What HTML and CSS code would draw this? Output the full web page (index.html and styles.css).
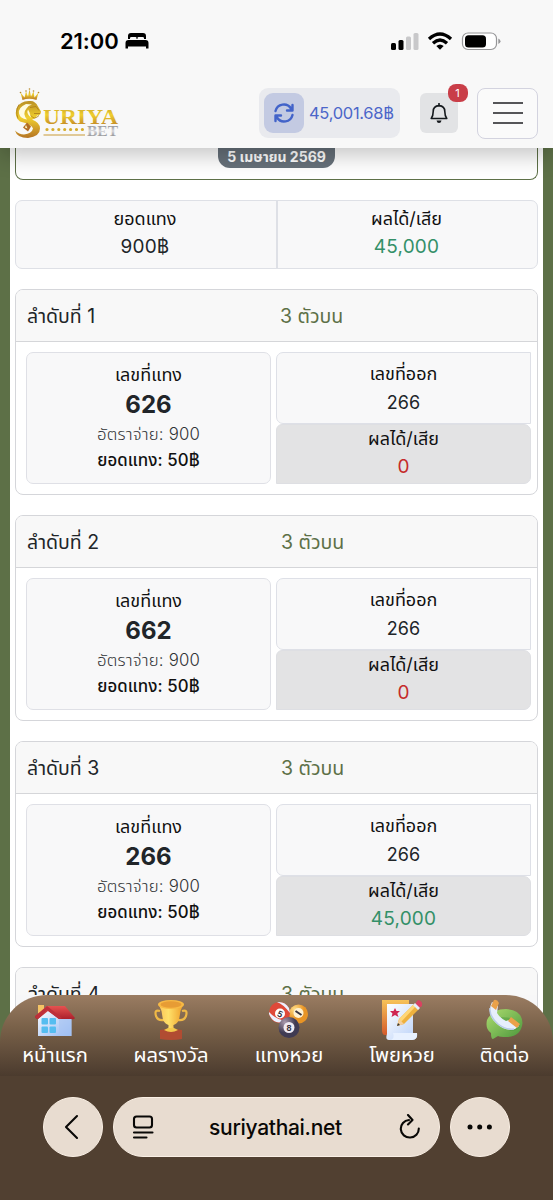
FILE: index.html
```
<!DOCTYPE html>
<html lang="th">
<head>
<meta charset="utf-8">
<meta name="viewport" content="width=device-width">
<title>Suriya Bet</title>
<link rel="stylesheet" href="styles.css">
</head>
<body>
<div class="screen">
  <header class="top">
    <div class="status">
      <span class="clock">21:00</span>
      <svg class="bed" width="24" height="18" viewBox="0 0 24 18"><path d="M3 7V4Q3 1 6 1H18Q21 1 21 4V7H19V6Q19 5 17.500 5H13.500Q12.500 5 12.500 6V7H11.500V6Q11.500 5 10.500 5H6.500Q5 5 5 6V7ZM3.500 8H20.500Q23.500 8 23.500 11V16.500H21V14.500H3V16.500H.5V11Q.5 8 3.500 8Z"/></svg>
      <svg class="signals" width="112" height="20" viewBox="0 0 112 20">
        <rect x="1" y="12" width="5" height="7" rx="1.500"/><rect x="8.500" y="9" width="5" height="10" rx="1.500"/>
        <g fill="#c8c8ca"><rect x="16" y="5.500" width="5" height="13.500" rx="1.500"/><rect x="23.500" y="2" width="5" height="17" rx="1.500"/></g>
        <g fill="none" stroke="#000" stroke-width="3.300"><path d="M39 8Q50-2 61 8"/><path d="M43 12.200Q50 5.800 57 12.200"/></g><path d="M46.300 15Q50 11.800 53.700 15L50 18.800Z"/>
        <rect x="72.500" y="2" width="34" height="16.500" rx="5.500" fill="#fff" stroke="#969698" stroke-width="1.200"/><rect x="75" y="4.200" width="21" height="12.200" rx="3.500"/><path d="M108.300 7.500Q110.500 8.500 110.500 10.300T108.300 13Z" fill="#969698"/>
      </svg>
    </div>
    <div class="bar">
      <svg class="logo" width="108" height="54" viewBox="0 -1.500 108 54">
        <defs><linearGradient id="gold" x1="0" y1="0" x2="0" y2="1"><stop offset="0" stop-color="#b98f25"/><stop offset=".45" stop-color="#f0cf2f"/><stop offset="1" stop-color="#b57424"/></linearGradient>
        <linearGradient id="silver" x1="0" y1="0" x2="0" y2="1"><stop offset="0" stop-color="#77787c"/><stop offset=".5" stop-color="#d9d9dc"/><stop offset="1" stop-color="#77777b"/></linearGradient></defs>
        <path d="M8.500 12.500L6.500 5L10.500 10L12 4L14 9L15.500 2L17 9L19.500 4L20.500 10L24.500 5L22.500 12.500Q15 10 8.500 12.500Z" fill="url(#gold)"/>
        <g fill="#b88928"><circle cx="6.500" cy="5" r=".8"/><circle cx="12" cy="3.500" r=".8"/><circle cx="15.500" cy="1.500" r=".8"/><circle cx="19.500" cy="3.500" r=".8"/><circle cx="24.500" cy="5" r=".8"/></g>
        <path d="M16 13.500Q6 13 2.500 21Q0 30 6 34Q18 37 19 41Q18 46 10 47Q5 47 1 43Q3 50.500 14 50.500Q26 49 26 41Q26 35 18 32Q22 31 23 28Q27 28 27 24L24 19Q21 13 16 13.500Z" fill="url(#gold)"/>
        <path d="M12 16.500Q4 20 5 26Q6 31 13 32Q8 26 12.500 21Q14 18 18 17Z" fill="#fffbe0"/>
        <path d="M14 22Q12 26 17 30L15.500 25Z" fill="#fffbe0"/>
        <path d="M5 17Q1 23 4 31M16 20L22 19L25 23M20 26L26 26M17 28Q20 33 25 28" fill="none" stroke="#a97a1c" stroke-width=".8"/>
        <path d="M13 35L9 40L14 44L17 39Z" fill="#b16c24"/><path d="M12 37.500L10.800 40L13.500 41Z" fill="#fff5c0"/>
        <text class="logo-main" x="29" y="36" textLength="75" lengthAdjust="spacingAndGlyphs" fill="url(#gold)">URIYA</text>
        <path d="M29.500 47.500H71" stroke="#c89a37" stroke-width="1.200"/>
        <path d="M33 42H70" stroke="#d6ad2c" stroke-width="3.200" stroke-dasharray="0 5.900" stroke-linecap="round"/>
        <text class="logo-sub" x="73" y="48" textLength="31" lengthAdjust="spacingAndGlyphs" fill="url(#silver)">BET</text>
      </svg>
      <div class="balance">
        <span class="refresh"><svg width="22" height="22" viewBox="0 0 22 22" fill="none" stroke="#4263c9" stroke-width="2.400" stroke-linecap="round" stroke-linejoin="round"><path d="M2.500 9A8.500 8.500 0 0 1 18 6.500M19.500 3V8.500H14M19.500 13A8.500 8.500 0 0 1 4 15.500M2.500 19V13.500H8"/></svg></span>
        <span class="amount">45,001.68฿</span>
      </div>
      <div class="bell"><svg width="20" height="22" viewBox="0 0 20 22" fill="none" stroke="#15191d" stroke-width="1.600"><path d="M2.200 16.500Q4.200 14 4.200 9.500Q4.200 4 10 3.600Q15.800 4 15.800 9.500Q15.800 14 17.800 16.500Z" stroke-linejoin="round"/><path d="M10 1V4"/><path d="M7.500 18.500H12.500Q12 21 10 21T7.500 18.500Z" fill="#15191d" stroke="none"/></svg><span class="count">1</span></div>
      <div class="menu"><i></i><i></i><i></i></div>
    </div>
  </header>

  <main class="page">
    <section class="date-panel"><span class="date">5 เมษายน 2569</span></section>
    <section class="summary">
      <div><p class="label">ยอดแทง</p><p class="value">900฿</p></div>
      <div><p class="label">ผลได้/เสีย</p><p class="value win">45,000</p></div>
    </section>

    <section class="ticket">
      <div class="ticket-head"><span>ลำดับที่ 1</span><span class="kind">3 ตัวบน</span></div>
      <div class="ticket-body">
        <div class="pick"><p class="label">เลขที่แทง</p><p class="number">626</p><p class="rate">อัตราจ่าย: 900</p><p class="stake">ยอดแทง: 50฿</p></div>
        <div class="outcome"><div class="drawn"><p class="label">เลขที่ออก</p><p class="result">266</p></div><div class="profit"><p class="label">ผลได้/เสีย</p><p class="value lose">0</p></div></div>
      </div>
    </section>
    <section class="ticket">
      <div class="ticket-head"><span>ลำดับที่ 2</span><span class="kind shift">3 ตัวบน</span></div>
      <div class="ticket-body">
        <div class="pick"><p class="label">เลขที่แทง</p><p class="number">662</p><p class="rate">อัตราจ่าย: 900</p><p class="stake">ยอดแทง: 50฿</p></div>
        <div class="outcome"><div class="drawn"><p class="label">เลขที่ออก</p><p class="result">266</p></div><div class="profit"><p class="label">ผลได้/เสีย</p><p class="value lose">0</p></div></div>
      </div>
    </section>
    <section class="ticket">
      <div class="ticket-head"><span>ลำดับที่ 3</span><span class="kind shift">3 ตัวบน</span></div>
      <div class="ticket-body">
        <div class="pick"><p class="label">เลขที่แทง</p><p class="number">266</p><p class="rate">อัตราจ่าย: 900</p><p class="stake">ยอดแทง: 50฿</p></div>
        <div class="outcome"><div class="drawn"><p class="label">เลขที่ออก</p><p class="result">266</p></div><div class="profit"><p class="label">ผลได้/เสีย</p><p class="value win">45,000</p></div></div>
      </div>
    </section>
    <section class="ticket">
      <div class="ticket-head"><span>ลำดับที่ 4</span><span class="kind shift">3 ตัวบน</span></div>
    </section>
  </main>

  <footer class="bottom">
    <nav class="tabs">
      <a class="tab"><svg width="42" height="42" viewBox="0 0 42 42">
        <defs><linearGradient id="wall" x2="1" y2="1"><stop stop-color="#fff"/><stop offset="1" stop-color="#8fb6f2"/></linearGradient><linearGradient id="roof" x2="0" y2="1"><stop stop-color="#e65250"/><stop offset="1" stop-color="#a91f2b"/></linearGradient></defs>
        <path d="M4 6H10V18H4Z" fill="#f5c465"/><path d="M14 10L37 19V37H4V18Z" fill="url(#wall)"/><path d="M25 17H38V37H25Z" fill="#a9c5f2" opacity=".65"/><path d="M13 7H31L41 19Q40 21 37 20H25L14 12L4 20Q1 20 1 17Z" fill="url(#roof)"/><path d="M13 7L28 19L25 20L13 11L4 20L1 18Z" fill="#bd303a"/>
        <g fill="#55bdf0"><rect x="7.500" y="19" width="6.500" height="6.500" rx="1"/><rect x="15.500" y="19" width="6.500" height="6.500" rx="1"/><rect x="7.500" y="27.500" width="6.500" height="6.500" rx="1"/><rect x="15.500" y="27.500" width="6.500" height="6.500" rx="1"/></g></svg><span>หน้าแรก</span></a>
      <a class="tab"><svg width="42" height="42" viewBox="0 0 42 42">
        <defs><linearGradient id="cup" x2="1"><stop stop-color="#fbc45a"/><stop offset=".4" stop-color="#ffe069"/><stop offset="1" stop-color="#ee9d28"/></linearGradient></defs>
        <path d="M10 12Q4 10 6 17Q8 22 14 21M32 12Q38 10 36 17Q34 22 28 21" fill="none" stroke="#efb846" stroke-width="2.200"/><path d="M8.500 5H33.500L30.500 12L29 21Q27 25 23.500 26Q23 31 27 33H15Q19 31 18.500 26Q15 25 13 21L11.500 12Z" fill="url(#cup)"/><ellipse cx="21" cy="5.500" rx="13" ry="4.500" fill="#f8b944"/><ellipse cx="21" cy="5.500" rx="10.500" ry="3.200" fill="#e79c35"/><path d="M10 31Q21 29 32 31V40Q21 42 10 40Z" fill="#b14c32"/><path d="M14 31Q21 35 28 31L24 29H18Z" fill="#f4c84c"/></svg><span>ผลรางวัล</span></a>
      <a class="tab"><svg width="42" height="42" viewBox="0 0 42 42">
        <defs><radialGradient id="dark" cx=".3" cy=".25"><stop stop-color="#a99aad"/><stop offset="1" stop-color="#403b53"/></radialGradient><radialGradient id="yellow" cx=".3" cy=".25"><stop stop-color="#ffe08b"/><stop offset="1" stop-color="#e89425"/></radialGradient></defs>
        <circle cx="30.500" cy="15" r="9.500" fill="url(#yellow)"/><circle cx="11.500" cy="13.500" r="10.500" fill="#df4939"/><path d="M9 3Q17 2 21 9L22 14Q15 5 9 3ZM1 13Q7 20 17 22Q6 27 1 15Z" fill="#eaf1ff"/><circle cx="12" cy="14.500" r="5" fill="#fff"/><circle cx="30.500" cy="14" r="5" fill="#fff2d2"/><circle cx="21" cy="28.500" r="10.500" fill="url(#dark)"/><circle cx="21" cy="28.500" r="5.500" fill="#eeeaf3"/>
        <text class="ball tilted" x="12" y="18">5</text><text class="ball" x="21" y="32">8</text><path d="M27.500 12L33.500 16" stroke="#39333e" stroke-width="2"/></svg><span>แทงหวย</span></a>
      <a class="tab"><svg width="42" height="42" viewBox="0 0 42 42">
        <defs><linearGradient id="paper" x2="1" y2="1"><stop stop-color="#fff"/><stop offset="1" stop-color="#b8d0f8"/></linearGradient><linearGradient id="orange" x2="0" y2="1"><stop stop-color="#f7c359"/><stop offset="1" stop-color="#d45a2b"/></linearGradient></defs>
        <path d="M1 1H28V36H4Q1 36 1 31Z" fill="url(#orange)"/><path d="M6 5H32V34H36Q37 41 31 41H8Q4 41 6 35Z" fill="url(#paper)"/><path d="M12 34H36Q37 41 31 41H10Q14 39 12 34Z" fill="#e8f1ff"/><path d="M14 9L15.500 12H19L16.300 14.500L17.500 18L14 16L10.500 18L11.500 14.500L9 12H12.500Z" fill="#cf2451"/><path d="M16 27L18 20L33 5L38 10L23 25Z" fill="#eeb13e"/><path d="M33 5L35 7L20 23L18 20Z" fill="#ffd676"/><path d="M16 27L18 20L23 25Z" fill="#f5cf9b"/><path d="M16 27L17 24L19 26Z" fill="#333"/><path d="M34 5L37 1Q42 2 41 7L38 9Z" fill="#d94261"/><path d="M32 6L34 4L39 9L37 11Z" fill="#e5eefb"/></svg><span>โพยหวย</span></a>
      <a class="tab"><svg width="42" height="42" viewBox="0 0 42 42">
        <defs><linearGradient id="green" x2="1" y2="1"><stop stop-color="#aedd70"/><stop offset="1" stop-color="#4a963b"/></linearGradient></defs>
        <path d="M22 10Q38 11 38.500 24Q37 38 22 38Q16 38 14 37L9 40Q7 40 7 34Q1 30 3 21Q8 10 22 10Z" fill="url(#green)"/><path d="M16 18L28 19L36 27Q34 32 26 32Z" fill="#4c9a3d" opacity=".5"/><path d="M8 3Q2 15 12 24Q21 33 31 30L35 27L25 21L22 22Q16 19 13 14L14 7Z" fill="#e7effc"/><path d="M6 9Q5 17 14 25Q22 31 30 30" fill="none" stroke="#b9cce9" stroke-width="1.500"/><path d="M7 7L10 1Q13 0 15 4L12 11ZM24 22L27 18L36 25L33 29Z" fill="#eaa149"/></svg><span>ติดต่อ</span></a>
    </nav>
    <div class="browser">
      <span class="round"><svg width="20" height="28" viewBox="0 0 20 28"><path d="M14 3L3 14L14 25"/></svg></span>
      <div class="address"><svg width="22" height="24" viewBox="0 0 22 24"><rect x="2" y="1.500" width="18" height="11" rx="2.500"/><path d="M2 17.500H20.500M2 22.500H14.500"/></svg><span>suriyathai.net</span><svg width="24" height="26" viewBox="0 0 24 26"><path d="M12 6A9 8.800 0 1 0 21.800 14.500M11 1L15.500 6L11 10.500"/></svg></div>
      <span class="round"><svg width="26" height="8" viewBox="0 0 26 8"><g class="dots"><circle cx="3" cy="4" r="2.500"/><circle cx="12.700" cy="4" r="2.500"/><circle cx="22.400" cy="4" r="2.500"/></g></svg></span>
    </div>
  </footer>
</div>
</body>
</html>
```
FILE: styles.css
```
* { box-sizing: border-box; }
body { margin: 0; font-family: Inter, "Noto Sans Thai", "Noto Sans", sans-serif; color: #212529; }
p { margin: 0; white-space: nowrap; }
svg { display: block; flex: none; }
.screen { width: 553px; height: 1200px; display: grid; grid-template-rows: 148px 847px 205px; overflow: hidden; background: #5d7047; }
.top { background: #f8f8f8; box-shadow: 0 7px 22px rgba(0,0,0,.24); position: relative; z-index: 2; }
.status { height: 82px; padding: 0 51px 0 60px; display: flex; align-items: center; }
.clock { font: 600 22px/26px Inter, sans-serif; letter-spacing: -.1px; color: #000; width: 65px; }
.signals { margin-left: auto; }
.bar { display: flex; align-items: center; height: 62px; padding: 0 15px 0 14px; }
.logo-main { font: bold 22px "Liberation Serif", serif; }
.logo-sub { font: bold 14px "Liberation Serif", serif; }
.balance { margin-left: 137px; width: 141px; height: 50px; border-radius: 9px; background: #e9eaee; padding-left: 5px; display: flex; align-items: center; }
.refresh { width: 40px; height: 40px; background: #c3cae2; border-radius: 9px; display: grid; place-items: center; }
.amount { color: #4c66c9; font-size: 16.500px; margin-left: 5px; letter-spacing: -.3px; }
.bell { position: relative; width: 38px; height: 40px; margin-left: 19.500px; background: #e2e3e5; border-radius: 6px; display: grid; place-items: center; }
.count { position: absolute; left: 28px; top: -9px; width: 20px; height: 18px; border-radius: 8px; background: #c93e48; color: #fff; text-align: center; font-size: 11px; line-height: 18px; }
.menu { width: 61px; height: 51px; margin-left: 19.500px; border: 1px solid #d3d3df; border-radius: 8px; background: #fafafa; display: flex; flex-direction: column; align-items: center; justify-content: center; gap: 8px; }
.menu i { height: 2px; width: 30px; background: #555558; }
.page { margin: 0 10px; padding: 0 5px; background: #fff; overflow: hidden; }
.date-panel { height: 32px; border: 1px solid #5d7047; border-top: 0; border-radius: 0 0 8px 8px; background: #fff; display: flex; justify-content: center; align-items: flex-start; }
.date { width: 117px; height: 20px; border-radius: 0 0 12px 12px; background: #67717a; color: #fff; font-size: 14px; font-weight: 700; line-height: 17px; text-align: center; white-space: nowrap; }
.summary { margin-top: 20px; height: 69px; display: grid; grid-template-columns: 260px 1fr; border: 1px solid #dee0e6; border-radius: 7px; background: #f8f8f9; text-align: center; }
.summary > div { padding-top: 4px; }
.summary > div:first-child { padding-right: 2px; }
.summary > div + div { border-left: 2px solid #dee0e6; padding-right: 2px; }
.label { color: #111; font-size: 18px; line-height: 27px; }
.value { font-size: 19px; line-height: 30px; letter-spacing: .2px; }
.win { color: #349068; }
.lose { color: #c52b2b; }
.ticket { height: 206px; margin-top: 20px; border: 1px solid #d5d6da; border-radius: 8px; background: #fff; overflow: hidden; }
.ticket-head { height: 52px; border-bottom: 1px solid #d5d6d9; background: #f8f8f8; display: flex; align-items: center; padding-left: 11px; font-size: 19.500px; line-height: 28px; }
.ticket-head span:first-child { width: 253px; }
.kind { color: #5d7047; }
.kind.shift { margin-left: 1px; }
.ticket-body { padding: 10px 5px 0 10px; display: grid; grid-template-columns: 245px 255px; gap: 5px; text-align: center; }
.pick { height: 132px; border: 1px solid #dfe0e6; border-radius: 7px; background: #f8f8f9; padding-top: 8px; }
.number { font-size: 24px; font-weight: 700; line-height: 33px; }
.rate { font-size: 16.800px; line-height: 26px; color: #303336; letter-spacing: .2px; font-weight: 350; }
.stake { font-size: 16.800px; line-height: 27px; font-weight: 500; color: #111; letter-spacing: .1px; }
.drawn { height: 72px; border: 1px solid #dee0e7; background: #f8f8f9; border-radius: 7px 0 0 7px; padding-top: 7px; }
.result { font-size: 18px; line-height: 31px; }
.profit { height: 60px; border: 1px solid #dedfe3; background: #e3e3e4; border-radius: 6px 7px 7px 0; }
.bottom { position: relative; z-index: 3; display: grid; grid-template-rows: 81px 1fr; }
.tabs { position: relative; display: grid; grid-template-columns: 110px 122px 114px 112px 93px; border-radius: 47px 47px 0 0; background: linear-gradient(#9a7c62, #796149 40%, #4b3b2e); }
.bottom::before { content: ""; position: absolute; z-index: -1; inset: 0 10px auto; height: 60px; background: #f7f7f8; border: solid #fff; border-width: 0 5px; box-shadow: inset 1px 0 #d5d6da, inset -1px 0 #d5d6da; }
.tab { display: flex; flex-direction: column; align-items: center; color: #fff; font-size: 20.200px; line-height: 28px; font-weight: 450; padding-top: 4px; white-space: nowrap; }
.ball { font: bold 9px "Liberation Sans", sans-serif; text-anchor: middle; fill: #39333e; }
.tilted { transform: rotate(25deg); transform-box: fill-box; transform-origin: center; }
.browser { background: #514031; display: flex; padding: 21px 43px; gap: 10px; }
.round, .address { height: 60px; background: #e8dcd0; border: 1px solid #faf0e5; border-radius: 30px; }
.round { width: 60px; display: grid; place-items: center; flex: none; }
.address { width: 327px; display: flex; align-items: center; justify-content: space-between; padding: 0 18px; color: #090806; font: 500 21px Inter, sans-serif; letter-spacing: -.3px; flex: none; }
.browser svg { fill: none; stroke: #090806; stroke-width: 2.100; stroke-linecap: round; stroke-linejoin: round; }
.browser .dots { fill: #090806; stroke: none; }
```
